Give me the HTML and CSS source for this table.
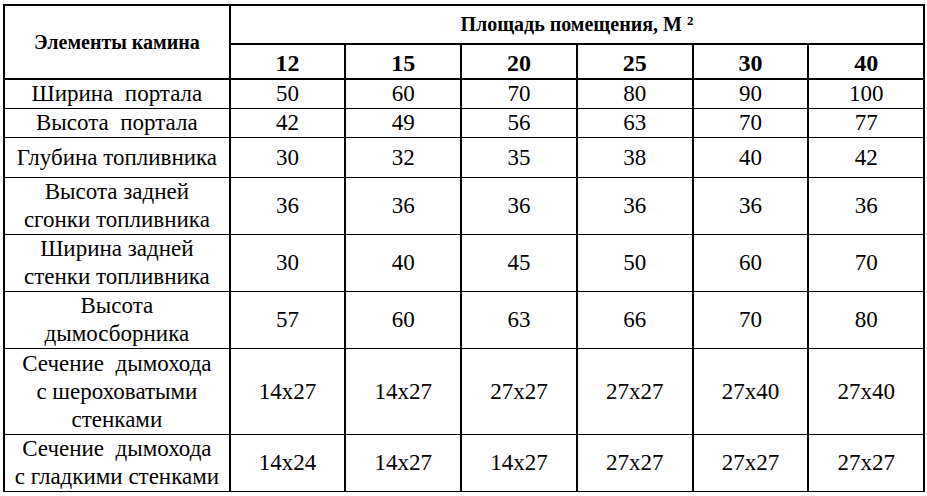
FILE: index.html
```html
<!DOCTYPE html>
<html>
<head>
<meta charset="utf-8">
<link rel="stylesheet" href="styles.css">
</head>
<body>
<table class="tbl">
  <tr class="h1">
    <th rowspan="2" class="name-head">Элементы камина</th>
    <th colspan="6" class="area-head">Площадь помещения, М <sup>2</sup></th>
  </tr>
  <tr class="h2">
    <th class="v">12</th><th class="v">15</th><th class="v">20</th><th class="v">25</th><th class="v">30</th><th class="v">40</th>
  </tr>
  <tr class="r1"><td>Ширина&nbsp; портала</td><td>50</td><td>60</td><td>70</td><td>80</td><td>90</td><td>100</td></tr>
  <tr class="r1"><td>Высота&nbsp; портала</td><td>42</td><td>49</td><td>56</td><td>63</td><td>70</td><td>77</td></tr>
  <tr class="r2"><td>Глубина топливника</td><td>30</td><td>32</td><td>35</td><td>38</td><td>40</td><td>42</td></tr>
  <tr class="r3"><td>Высота задней<br>сгонки топливника</td><td>36</td><td>36</td><td>36</td><td>36</td><td>36</td><td>36</td></tr>
  <tr class="r3"><td>Ширина задней<br>стенки топливника</td><td>30</td><td>40</td><td>45</td><td>50</td><td>60</td><td>70</td></tr>
  <tr class="r3"><td>Высота<br>дымосборника</td><td>57</td><td>60</td><td>63</td><td>66</td><td>70</td><td>80</td></tr>
  <tr class="r4"><td>Сечение&nbsp; дымохода<br>с шероховатыми<br>стенками</td><td>14x27</td><td>14x27</td><td>27x27</td><td>27x27</td><td>27x40</td><td>27x40</td></tr>
  <tr class="r5"><td>Сечение&nbsp; дымохода<br>с гладкими стенками</td><td>14x24</td><td>14x27</td><td>14x27</td><td>27x27</td><td>27x27</td><td>27x27</td></tr>
</table>
</body>
</html>
```

FILE: styles.css
```css
body {
  margin: 4px 0 0 3px;
  font-family: "Liberation Serif", "Times New Roman", serif;
}
.tbl {
  border-collapse: collapse;
  width: 922px;
  border-top: 2px solid #000;
  border-left: 1px solid #000;
  border-right: 1px solid #000;
  border-bottom: 1px solid #000;
}
.tbl th, .tbl td {
  font-family: "Liberation Serif", "Times New Roman", serif;
  padding: 0;
  text-align: center;
  vertical-align: middle;
  border-left: 2px solid #000;
  border-right: 2px solid #000;
  border-top: 1px solid #000;
  border-bottom: 1px solid #000;
}
.tbl td {
  font-size: 23px;
  line-height: 28px;
}
.name-head {
  width: 227px;
  font-size: 20px;
  border-bottom: 2px solid #000 !important;
}
.area-head {
  font-size: 20px;
  border-bottom: 2px solid #000 !important;
}
.area-head sup {
  font-size: 13px;
  vertical-align: 6px;
  line-height: 0;
}
.v {
  width: 116px;
}
.h1 { height: 39px; }
.h2 { height: 35px; }
.h2 th {
  font-size: 24px;
  border-bottom: 2px solid #000;
  padding-top: 4px;
}
.r1 { height: 28px; }
.r2 { height: 40px; }
.r3 { height: 55px; }
.r4 { height: 86px; }
.r5 { height: 56px; }
```
